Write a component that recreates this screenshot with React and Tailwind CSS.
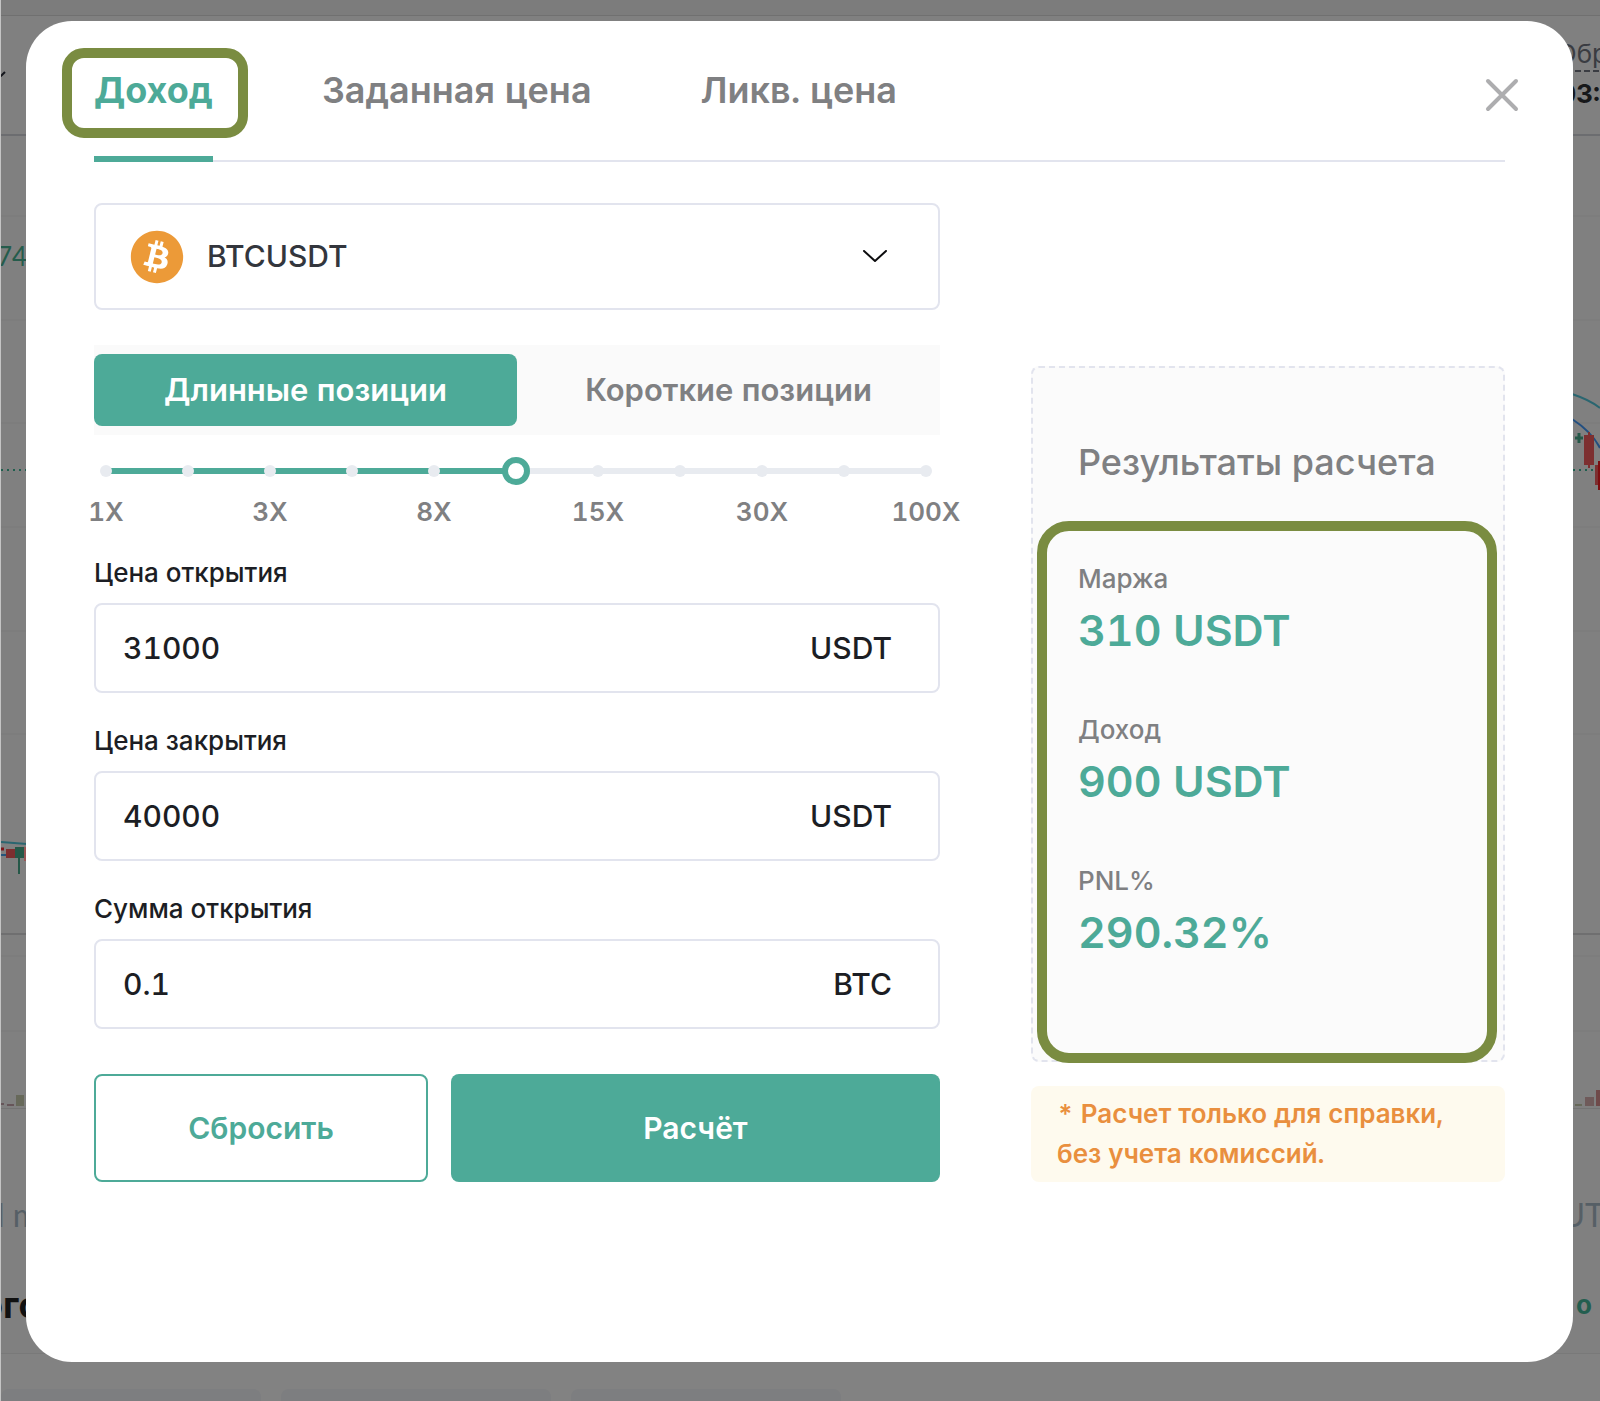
import { useState } from 'react'
import { FaBitcoin } from 'react-icons/fa'

const TABS = ['Доход', 'Заданная цена', 'Ликв. цена']
const SIDES = ['Длинные позиции', 'Короткие позиции']
const TICKS = [0, 10, 20, 30, 40, 50, 60, 70, 80, 90, 100]
const LEVERAGES = ['1X', '3X', '8X', '15X', '30X', '100X']
const FIELDS = [
  { id: 'open-price', label: 'Цена открытия', value: '31000', unit: 'USDT' },
  { id: 'close-price', label: 'Цена закрытия', value: '40000', unit: 'USDT' },
  { id: 'amount', label: 'Сумма открытия', value: '0.1', unit: 'BTC' },
]
const RESULTS = [
  { label: 'Маржа', value: '310 USDT' },
  { label: 'Доход', value: '900 USDT' },
  { label: 'PNL%', value: '290.32%' },
]

// Candles and volume at both edges of the trading page
function Chart() {
  return (
    <svg className="block h-full w-full overflow-hidden">
      {[80, 184, 287, 391, 495, 598, 820, 895].map(y => (
        <line key={y} x1="0" x2="100%" y1={y} y2={y} stroke="#7b7b7b" />
      ))}
      <line x1="0" x2="100%" y1="798" y2="798" stroke="#6f6f70" strokeWidth="2" />
      <line x1="0" x2="100%" y1="334" y2="334" stroke="#1f5f4e" strokeWidth="2" strokeDasharray="2 4" />

      <path d="M0 706 L26 708" stroke="#2a6670" strokeWidth="2" />
      <path d="M0 719 H5" stroke="#24557c" strokeWidth="2" />
      <path d="M0 713 H3" stroke="#7c1518" strokeWidth="3" />
      <rect x="5" y="713" width="9" height="9" fill="#7d2f30" />
      <rect x="14" y="711" width="9" height="11" fill="#255848" />
      <rect x="17" y="722" width="2" height="16" fill="#255848" />
      <rect x="23" y="711" width="4" height="14" fill="#9a5656" />
      <rect x="0" y="967" width="3" height="2" fill="#665559" />
      <rect x="6" y="968" width="7" height="2" fill="#665559" />
      <rect x="15" y="959" width="8" height="11" fill="#67695a" />

      <svg x="100%" overflow="visible" fill="none">
        <path d="M-28 258 Q-10 264 0 272" stroke="#2a6670" strokeWidth="2" />
        <path d="M-28 283 Q-8 296 0 312" stroke="#234f80" strokeWidth="2" />
        <path d="M-25 302 H-17 M-21 297 V307" stroke="#255848" strokeWidth="3" />
        <rect x="-16" y="299" width="10" height="30" fill="#7d2f30" />
        <rect x="-12" y="296" width="2" height="36" fill="#7d2f30" />
        <rect x="-5" y="329" width="5" height="20" fill="#7d2f30" />
        <rect x="-2" y="325" width="2" height="29" fill="#7c0d10" />
        <rect x="-25" y="968" width="7" height="2" fill="#67695a" />
        <rect x="-15" y="961" width="9" height="9" fill="#6f5a5a" />
        <rect x="-4" y="954" width="4" height="16" fill="#6f4a4a" />
      </svg>
    </svg>
  )
}

function TradingPage() {
  return (
    <div aria-hidden="true" className="col-start-1 row-start-1 flex flex-col overflow-hidden border-l border-[#c4c4c4] bg-[#808080]">
      <div className="h-4 border-b border-[#707070] bg-[#7c7c7c]" />
      <div className="flex h-[120px] justify-between border-b-2 border-[#6c6d70] pt-[22px]">
        <svg className="mt-8 h-3 w-2" viewBox="0 0 8 12" fill="none">
          <path d="M-2 7 L0 6 L4 2" stroke="#14161c" strokeWidth="2" />
        </svg>
        <div className="-mr-2 flex flex-col items-end">
          <span className="border-b-2 border-dashed border-[#3a3c42] text-[26px] leading-[32px] text-[#3a3c42]">Обр</span>
          <span className="mr-2 text-[26px] leading-[44px] font-bold text-[#17181a]">03:</span>
        </div>
      </div>
      <div className="relative h-[973px] border-b border-[#747474]">
        <Chart />
        <span className="absolute top-[104px] -left-1 font-['Lato',sans-serif] text-[26px] leading-[32px] text-[#255c4c]">74</span>
      </div>
      <div className="flex h-[245px] flex-col gap-[58px] border-b border-[#797979] pt-[90px]">
        <div className="flex justify-between font-['Lato',sans-serif] text-[32px] leading-[32px] text-[#565f66]">
          <span className="-ml-1">l m</span>
          <span className="-mr-1">UT</span>
        </div>
        <div className="flex justify-between leading-[32px] font-bold">
          <span className="-ml-5 text-[36px] text-[#111111]">ого</span>
          <span className="mr-2 text-[26px] text-[#235e4f]">о</span>
        </div>
      </div>
      <div className="flex flex-1 items-end gap-5 bg-[#828282]">
        <div className="h-3 w-[260px] rounded-t-lg bg-[#7d7e80]" />
        <div className="h-3 w-[270px] rounded-t-lg bg-[#7d7e80]" />
        <div className="h-3 w-[270px] rounded-t-lg bg-[#7d7e80]" />
      </div>
    </div>
  )
}

function LeverageSlider({ value, onChange }) {
  return (
    <div className="mt-[22px] mr-[14px] ml-3">
      <div className="relative flex h-7 items-center">
        <div className="h-[6px] w-full bg-[#e8ebf0]">
          <div className="h-full bg-[#4daa98]" style={{ width: `${value}%` }} />
        </div>
        <div className="absolute inset-x-0 flex justify-between">
          {TICKS.map(t => (
            <span key={t} className="-mx-[6px] h-3 w-3 rounded-full bg-[#e8ebf0]" />
          ))}
        </div>
        <input
          type="range"
          min="0"
          max="100"
          step="10"
          aria-label="Кредитное плечо"
          value={value}
          onChange={e => onChange(Number(e.target.value))}
          className="absolute -left-[14px] h-7 w-[calc(100%+28px)] cursor-pointer appearance-none bg-transparent [&::-webkit-slider-thumb]:h-7 [&::-webkit-slider-thumb]:w-7 [&::-webkit-slider-thumb]:appearance-none [&::-webkit-slider-thumb]:rounded-full [&::-webkit-slider-thumb]:border-[6px] [&::-webkit-slider-thumb]:border-[#4daa98] [&::-webkit-slider-thumb]:bg-white"
        />
      </div>
      <div className="mt-[11px] flex justify-between text-[26px] leading-[32px] font-semibold text-[#7f8082]">
        {LEVERAGES.map(l => (
          <span key={l} className="flex w-0 justify-center whitespace-nowrap">{l}</span>
        ))}
      </div>
    </div>
  )
}

export default function App() {
  const [tab, setTab] = useState(TABS[0])
  const [side, setSide] = useState(SIDES[0])
  const [leverage, setLeverage] = useState(50)

  return (
    <div className="grid min-h-screen grid-cols-1 font-['Inter',sans-serif] tabular-nums">
      <TradingPage />

      <div role="dialog" aria-label="Калькулятор" className="relative col-start-1 row-start-1 mt-[21px] mr-[27px] mb-[39px] ml-[26px] rounded-[46px] bg-white px-[68px]">
        {/* Tabs */}
        <div className="flex items-start justify-between border-b-2 border-[#e2e4ee] pt-[27px]">
          <div role="tablist" className="-mb-[2px] flex gap-[109px]">
            {TABS.map(t => (
              <button
                key={t}
                role="tab"
                aria-selected={t === tab}
                onClick={() => setTab(t)}
                className={`relative border-b-[6px] pb-6 text-[36px] leading-[84px] ${t === tab ? 'border-[#4daa98] font-bold text-[#4daa98]' : 'border-transparent font-semibold text-[#7f8082]'}`}
              >
                {t}
                {t === tab && (
                  <span className="pointer-events-none absolute top-0 -right-[35px] -left-8 h-[90px] rounded-[22px] border-[10px] border-[#7a8c41]" />
                )}
              </button>
            ))}
          </div>
          <button aria-label="Закрыть" className="mt-[29px] -mr-4">
            <svg className="h-9 w-9" viewBox="0 0 36 36" fill="none" stroke="#adadaf" strokeWidth="4" strokeLinecap="round">
              <path d="M3 4 L31 32 M31 4 L3 32" />
            </svg>
          </button>
        </div>

        <div className="grid grid-cols-[846fr_474fr] gap-[91px]">
          {/* Form */}
          <form className="pt-[41px]" onSubmit={e => e.preventDefault()}>
            <div className="relative flex items-center">
              <select
                aria-label="Контракт"
                className="h-[107px] w-full appearance-none rounded-lg border-2 border-[#e2e4ee] bg-white pl-[111px] text-[30px] font-medium text-[#33363d]"
              >
                <option>BTCUSDT</option>
              </select>
              <FaBitcoin className="pointer-events-none absolute left-9 h-[54px] w-[54px] text-[#ec9a38]" />
              <svg className="pointer-events-none absolute right-[52px] h-[14px] w-[26px]" viewBox="0 0 26 14" fill="none" stroke="#0c0c0e" strokeWidth="2" strokeLinecap="round" strokeLinejoin="round">
                <path d="M2 1 L13 11 L24 1" />
              </svg>
            </div>

            <div className="mt-[35px] grid grid-cols-2 bg-[#fafafa] py-[9px]">
              {SIDES.map(s => (
                <button
                  key={s}
                  type="button"
                  onClick={() => setSide(s)}
                  className={`h-[72px] rounded-lg text-[31px] font-semibold ${s === side ? 'bg-[#4daa98] text-white' : 'text-[#7f8082]'}`}
                >
                  {s}
                </button>
              ))}
            </div>

            <LeverageSlider value={leverage} onChange={setLeverage} />

            <div className="mt-[29px] flex flex-col gap-8">
              {FIELDS.map(f => (
                <div key={f.id} className="flex flex-col gap-[14px]">
                  <label htmlFor={f.id} className="text-[26px] leading-[32px] font-medium text-[#1c1e24]">{f.label}</label>
                  <div className="flex h-[90px] items-center rounded-lg border-2 border-[#e2e4ee] pr-[46px] pl-[27px] text-[30px] font-medium text-[#1c1e24]">
                    <input id={f.id} defaultValue={f.value} className="min-w-0 flex-1 bg-transparent outline-none" />
                    <span>{f.unit}</span>
                  </div>
                </div>
              ))}
            </div>

            <div className="mt-[45px] grid grid-cols-[334fr_489fr] gap-[23px] text-[30px] font-semibold">
              <button type="reset" className="h-[108px] rounded-lg border-2 border-[#4daa98] text-[#4daa98]">Сбросить</button>
              <button type="submit" className="h-[108px] rounded-lg bg-[#4daa98] text-white">Расчёт</button>
            </div>
          </form>

          {/* Results */}
          <div className="flex flex-col gap-6 pt-[204px]">
            <div className="flex flex-1 flex-col rounded-lg border-2 border-dashed border-[#e2e4ee] bg-[#fbfbfb]">
              <h2 className="mt-[70px] ml-[45px] text-[36px] leading-[48px] font-medium text-[#7f8082]">Результаты расчета</h2>
              <dl className="mt-[35px] mr-[6px] -mb-[3px] ml-1 flex flex-1 flex-col gap-14 rounded-[32px] border-[10px] border-[#7a8c41] pt-8 pl-[31px]">
                {RESULTS.map(r => (
                  <div key={r.label}>
                    <dt className="text-[26px] leading-[32px] font-medium text-[#7f8082]">{r.label}</dt>
                    <dd className="mt-2 text-[43px] leading-[55px] font-semibold text-[#4daa98]">{r.value}</dd>
                  </div>
                ))}
              </dl>
            </div>
            <p className="rounded-lg bg-[#fefaee] py-2 pr-5 pl-[26px] text-[26px] leading-[40px] font-semibold text-[#e98f3e]">
              * Расчет только для справки, без учета комиссий.
            </p>
          </div>
        </div>
      </div>
    </div>
  )
}
